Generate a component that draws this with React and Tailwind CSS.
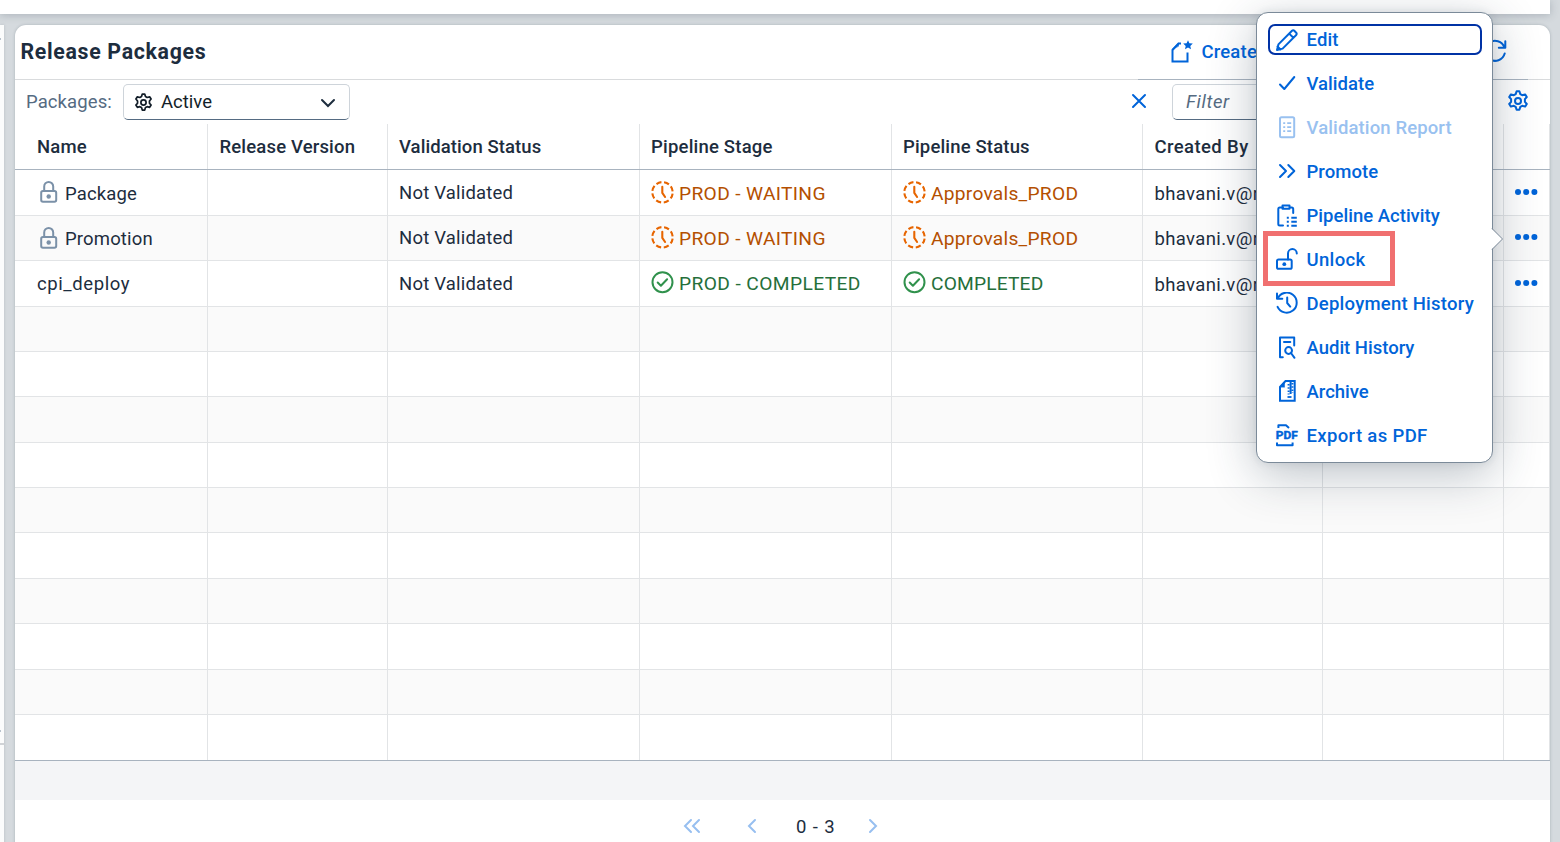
import React from "react";

function Icon({ children, className = "", size = 24, sw = 2 }) {
  return (
    <svg
      viewBox={`0 0 ${size} ${size}`}
      width={size}
      height={size}
      fill="none"
      stroke="currentColor"
      strokeWidth={sw}
      strokeLinecap="round"
      strokeLinejoin="round"
      className={`shrink-0 ${className}`}
    >
      {children}
    </svg>
  );
}

const gearPath =
  "M9.6 1.2h2.8l.9 2.9 1.9 1.1 2.9-.8 1.7 2.6-1.9 2.2v2.6l1.9 2.2-1.7 2.6-2.9-.8-1.9 1.1-.9 2.9H9.6l-.9-2.9-1.9-1.1-2.9.8-1.7-2.6 1.9-2.2V9.2L2.2 7l1.7-2.6 2.9.8 1.9-1.1z";

function Gear({ px, className, sw = 2 }) {
  return (
    <svg viewBox="0 0 22 22" width={px} height={px} fill="none" stroke="currentColor" strokeWidth={sw} strokeLinejoin="round" className={`shrink-0 ${className}`}>
      <path d={gearPath} />
      <circle cx="11" cy="11" r="3" />
    </svg>
  );
}

function Lock() {
  return (
    <svg viewBox="0 0 18 23" width="18" height="23" fill="none" stroke="currentColor" strokeWidth="2" className="shrink-0 text-[#7b91a8]">
      <rect x="1.2" y="10" width="15" height="10.8" rx="1.8" />
      <path d="M4.2 10V5.5a4.5 4.5 0 0 1 9 0V10" />
      <circle cx="8.7" cy="15.5" r="2.2" fill="currentColor" stroke="none" />
    </svg>
  );
}

function Waiting() {
  return (
    <Icon size={24} sw={2.1} className="text-[#e76500]">
      <circle cx="11.5" cy="11.3" r="10.2" strokeDasharray="5.3 2.71" strokeDashoffset="-1.3" strokeLinecap="butt" />
      <path d="M11.3 5.8v6l2.8 4.2" />
    </Icon>
  );
}

function Done() {
  return (
    <Icon size={24} sw={2} className="text-[#30914c]">
      <circle cx="11.5" cy="11.2" r="10" />
      <path d="M6.7 11.5l3.2 3.2L16.1 8.2" />
    </Icon>
  );
}

const menu = [
  { label: "Edit", track: "tracking-[0.1px]", focus: true, icon: <path d="M2 22l1.4-5.6L17 2.8a1.6 1.6 0 0 1 2.3 0l1.9 1.9a1.6 1.6 0 0 1 0 2.3L7.6 20.6zM14.2 5.6l4.2 4.2M2.5 18.5l3 3" /> },
  { label: "Validate", track: "tracking-[0.02px]", icon: <path d="M5 12.5l4.3 4.5L19.3 5" /> },
  {
    label: "Validation Report",
    track: "tracking-[0.12px]",
    disabled: true,
    icon: (
      <>
        <rect x="5" y="1.3" width="14.2" height="20" rx="1.5" />
        <path d="M8.2 7.2h2M8.2 11.2h2M8.2 15.2h2M12.2 7.2h4M12.2 11.2h4M12.2 15.2h4" strokeWidth="1.8" strokeLinecap="butt" />
      </>
    ),
  },
  { label: "Promote", track: "tracking-[0.05px]", icon: <path d="M5 5l6 6-6 6M13.3 5l6 6-6 6" /> },
  {
    label: "Pipeline Activity",
    track: "tracking-[0.02px]",
    icon: (
      <>
        <path d="M8 3.5H4.8a1.5 1.5 0 0 0-1.5 1.5v15a1.5 1.5 0 0 0 1.5 1.5H8M14.5 3.5h2.2a1.5 1.5 0 0 1 1.5 1.5v4M7.5 1.5h7v3.2h-7z" />
        <path d="M11.8 13.8h2M11.8 17.8h2M11.8 21.8h2M16.3 13.8h5.5M16.3 17.8h5.5M16.3 21.8h5.5" strokeLinecap="butt" />
      </>
    ),
  },
  {
    label: "Unlock",
    track: "tracking-[0.35px]",
    icon: (
      <>
        <rect x="2" y="11.5" width="14.7" height="9.3" rx="1.6" />
        <path d="M13 11.5V5.5a4.4 4.4 0 0 1 8.8 0" />
        <circle cx="9.3" cy="16.2" r="1.9" fill="currentColor" stroke="none" />
      </>
    ),
  },
  {
    label: "Deployment History",
    track: "tracking-[0.24px]",
    icon: <path d="M2 1.5v5.3h5.3M2.6 6.5A10 10 0 1 1 2.6 14.8M12.2 5.5v5.5l3 3.6" />,
  },
  {
    label: "Audit History",
    track: "tracking-[0px]",
    icon: (
      <>
        <path d="M7.8 21.3H5V1.5h14.2v8M9 6h6.3" />
        <circle cx="13.6" cy="14.5" r="3.4" />
        <path d="M16 17l3.5 4.8" />
      </>
    ),
  },
  {
    label: "Archive",
    track: "tracking-[0px]",
    icon: (
      <>
        <path d="M5 7l5.5-6h9.2v19.8H5z" strokeLinejoin="miter" />
        <path d="M5 7l4.5-5v5z" fill="currentColor" strokeWidth="0.5" />
        <path d="M15.6 2v12" strokeWidth="2" strokeLinecap="butt" />
        <path d="M13.6 4v10.5M17.4 3v10" strokeWidth="2" strokeDasharray="1.6 1.6" strokeLinecap="butt" />
        <path d="M12.5 17h4" strokeWidth="1.8" strokeLinecap="butt" />
      </>
    ),
  },
  {
    label: "Export as PDF",
    track: "tracking-[0.35px]",
    icon: (
      <>
        <path d="M3.4 4V1.3H11l3 2.7M2 18.5v2.7h15.6v-2.7" strokeLinecap="butt" />
        <text x="0.8" y="15.2" fontSize="10.6" fontWeight="700" fill="currentColor" stroke="currentColor" strokeWidth="0.4" textLength="22" lengthAdjust="spacingAndGlyphs" fontFamily="Roboto, sans-serif">PDF</text>
      </>
    ),
  },
];

const columns = [
  { label: "Name", cls: "pl-[22px] tracking-[0.2px]" },
  { label: "Release Version", cls: "pl-[11.5px] tracking-[0.16px]" },
  { label: "Validation Status", cls: "pl-[11px] tracking-[0.08px]" },
  { label: "Pipeline Stage", cls: "pl-[11px] tracking-[0.2px]" },
  { label: "Pipeline Status", cls: "pl-[11px] tracking-[0.16px]" },
  { label: "Created By", cls: "pl-[11.5px] tracking-[0.4px]" },
  { label: "", cls: "" },
  { label: "", cls: "" },
];
const grid = "grid grid-cols-[193px_180px_252px_252px_251px_180px_181px_46px]";
const cell = "flex items-center border-r border-[#e2e4e6] whitespace-nowrap overflow-hidden";

const rows = [
  { h: "h-[46px]", name: "Package", nameTrack: "tracking-[0.15px]", locked: true, stage: "PROD - WAITING", status: "Approvals_PROD", stageTrack: "tracking-[0.34px]", statusTrack: "tracking-[0.25px]", waiting: true },
  { h: "h-[45px]", name: "Promotion", nameTrack: "tracking-[0.15px]", locked: true, stage: "PROD - WAITING", status: "Approvals_PROD", stageTrack: "tracking-[0.34px]", statusTrack: "tracking-[0.25px]", waiting: true },
  { h: "h-[46px]", name: "cpi_deploy", nameTrack: "tracking-[0.6px]", stage: "PROD - COMPLETED", status: "COMPLETED", stageTrack: "tracking-[0.4px]", statusTrack: "tracking-[0.17px]", shift: "pb-px" },
  { h: "h-[45px]" },
  { h: "h-[45px]" },
  { h: "h-[46px]" },
  { h: "h-[45px]" },
  { h: "h-[45px]" },
  { h: "h-[46px]" },
  { h: "h-[45px]" },
  { h: "h-[46px]" },
  { h: "h-[45px]" },
  { h: "h-[46px]", last: true },
];

function Dots() {
  return (
    <svg viewBox="0 0 24 8" width="24" height="8" fill="#0064d9" className="mb-[2px]">
      <circle cx="4" cy="4" r="3" />
      <circle cx="12.2" cy="4" r="3" />
      <circle cx="20.4" cy="4" r="3" />
    </svg>
  );
}

function Row({ row, odd }) {
  const tone = row.waiting ? "text-[#b44f00]" : "text-[#256f3a]";
  const StatusIcon = row.waiting ? Waiting : Done;
  const shift = row.shift || "";
  return (
    <div className={`${grid} ${row.h} border-b ${row.last ? "border-[#a8b3bf]" : "border-[#e2e4e6]"} ${odd ? "bg-[#fafafa]" : "bg-white"}`}>
      <div className={`${cell} ${shift} pl-[22px]`}>
        {row.locked && (
          <span className="mr-[7px] ml-[3px] flex">
            <Lock />
          </span>
        )}
        <span className={`pt-[2px] ${row.nameTrack}`}>{row.name}</span>
      </div>
      <div className={cell} />
      <div className={`${cell} pl-[11px] tracking-[0.2px]`}>{row.name && "Not Validated"}</div>
      {[
        [row.stage, row.stageTrack],
        [row.status, row.statusTrack],
      ].map(([text, track], i) => (
        <div key={i} className={`${cell} ${shift} pl-[11px] ${tone}`}>
          {text && (
            <>
              <StatusIcon />
              <span className={`ml-[4px] pt-[2px] text-[19.2px] ${track}`}>{text}</span>
            </>
          )}
        </div>
      ))}
      <div className={`${cell} pl-[11.5px] tracking-[0.36px]`}>
        <span className="pt-[2px]">{row.name && "bhavani.v@r"}</span>
      </div>
      <div className={cell} />
      <div className={`${cell} pl-[10px]`}>{row.name && <Dots />}</div>
    </div>
  );
}

export default function App() {
  return (
    <div className="relative flex h-[842px] w-[1560px] flex-col overflow-hidden bg-[#d5dade] font-['Roboto',sans-serif] text-[18.5px] leading-[24px] text-[#1d2d3e]">
      <div className="h-[14px] w-[1550px] shrink-0 bg-white shadow-[0_1px_8px_rgba(60,75,90,0.28)]" />
      <div className="mt-[11px] flex flex-1">
        <div className="flex w-[4px] flex-col bg-[#fbfcfc] shadow-[0_0_3px_rgba(60,75,90,0.2)]">
          <div className="mt-[13px] h-[2px] w-px bg-[#b8c2cc]" />
          <div className="mt-[690px] h-[2px] w-px bg-[#b8c2cc]" />
          <div className="mt-[11px] h-[2px] bg-[#d0d3d6]" />
        </div>
        <main className="ml-[11px] flex w-[1535px] flex-col overflow-hidden rounded-t-[11px] bg-white shadow-[0_0_3px_rgba(60,75,90,0.3)]">
          <header className="flex h-[54px] shrink-0 items-center pl-[5.5px]">
            <h1 className="text-[21.3px] font-bold tracking-[0.68px]">Release Packages</h1>
            <div className="ml-auto flex items-center font-medium text-[#0064d9]">
              <Icon size={24} className="mb-[1px]">
                <path d="M11 3.5H8.5L2.5 10v11.5h15V12.5" strokeLinecap="butt" strokeLinejoin="miter" />
                <path d="M2.5 9l6-6v3z" fill="currentColor" strokeWidth="0.5" />
                <path d="M18 0.3l1.4 3 3.4.3-2.5 2.3.7 3.4-3-1.8-3 1.8.7-3.4-2.5-2.3 3.4-.3z" fill="currentColor" stroke="none" />
              </Icon>
              <span className="ml-[7px] tracking-[0.2px]">Create</span>
            </div>
            <Icon size={24} className="mr-[43px] mb-[3px] ml-[226px] text-[#0064d9]">
              <path d="M22.3 2.2v6.5h-6.5M21.5 8.5A10 10 0 1 0 21.7 14.5" />
            </Icon>
          </header>
          <div className="flex h-px shrink-0 bg-[#d9dbdd] pl-[1123px]">
            <div className="w-[390px] bg-[#a8b3bf]" />
          </div>
          <div className="flex h-[44px] shrink-0 items-center">
            <span className="ml-[11px] w-[97px] tracking-[0.1px] text-[#556b82]">Packages:</span>
            <div className="flex h-[36px] w-[227px] items-center rounded-[5px] border border-[#ced4da] border-b-[#556b82] px-[10px]">
              <Gear px={19} className="text-[#131e29]" sw={2} />
              <span className="ml-[8px] text-[#131e29]">Active</span>
              <svg viewBox="0 0 16 10" width="16" height="10" fill="none" stroke="#1d2d3e" strokeWidth="2" strokeLinecap="round" className="mt-[2px] mr-[3px] ml-auto">
                <path d="M2 2l6 6 6-6" />
              </svg>
            </div>
            <svg viewBox="0 0 16 16" width="16" height="16" fill="none" stroke="#0064d9" strokeWidth="2" strokeLinecap="round" className="mb-[2px] ml-[781px]">
              <path d="M2 2l12 12M14 2L2 14" />
            </svg>
            <div className="ml-[25px] flex h-[36px] w-[300px] items-center rounded-[5px] border border-[#ced4da] border-b-[#556b82] pl-[13px] tracking-[0.6px] text-[#556b82] italic">
              Filter
            </div>
            <Gear px={22} className="mb-[2px] ml-[35px] text-[#0064d9]" />
          </div>
          <div className={`${grid} h-[46px] shrink-0 border-b border-[#a8b3bf] font-medium`}>
            {columns.map((c, i) => (
              <div key={i} className={`${cell} ${c.cls}`}>
                {c.label}
              </div>
            ))}
          </div>
          {rows.map((r, i) => (
            <Row key={i} row={r} odd={i % 2 === 1} />
          ))}
          <div className="h-[39px] shrink-0 bg-[#f4f5f7]" />
          <footer className="flex h-[52px] shrink-0 items-center pl-[668px] text-[#97bff0]">
            <svg viewBox="0 0 18 16" width="18" height="16" fill="none" stroke="currentColor" strokeWidth="2" strokeLinecap="round">
              <path d="M8 2L2 8l6 6M16 2l-6 6 6 6" />
            </svg>
            <svg viewBox="0 0 10 16" width="10" height="16" fill="none" stroke="currentColor" strokeWidth="2" strokeLinecap="round" className="ml-[46px]">
              <path d="M8 2L2 8l6 6" />
            </svg>
            <span className="ml-[39px] w-[72px] pt-px tracking-[0.9px] text-[#1d2d3e]">0 - 3</span>
            <svg viewBox="0 0 10 16" width="10" height="16" fill="none" stroke="currentColor" strokeWidth="2" strokeLinecap="round">
              <path d="M2 2l6 6-6 6" />
            </svg>
          </footer>
        </main>
      </div>

      <div className="absolute top-[12px] left-[1256px] h-[451px] w-[237px] rounded-[12px] border border-[#7b8a99] bg-white px-[11px] pt-[11px] shadow-[0_12px_48px_rgba(34,53,72,0.3),0_0_8px_rgba(34,53,72,0.1)]">
        <svg viewBox="0 0 13 24" width="13" height="24" className="absolute top-[214px] left-[234px]">
          <path d="M0 1L11.5 12 0 23z" fill="white" />
          <path d="M1 1.5L11.5 12 1 22.5" fill="none" stroke="#7b8a99" />
        </svg>
        <ul className="flex flex-col gap-[13px] font-medium text-[#0064d9]">
          {menu.map((m) => (
            <li
              key={m.label}
              className={`flex h-[31px] w-[214px] items-center rounded-[7px] whitespace-nowrap ${m.focus ? "border-2 border-[#0032a5] pl-[5px]" : "pl-[7px]"} ${m.disabled ? "text-[#99c1f0]" : ""}`}
            >
              <Icon>{m.icon}</Icon>
              <span className={`ml-[7.5px] ${m.track}`}>{m.label}</span>
            </li>
          ))}
        </ul>
      </div>
      <div className="absolute top-[231px] left-[1263px] h-[55px] w-[132px] border-[5px] border-[#f07070]" />
    </div>
  );
}
